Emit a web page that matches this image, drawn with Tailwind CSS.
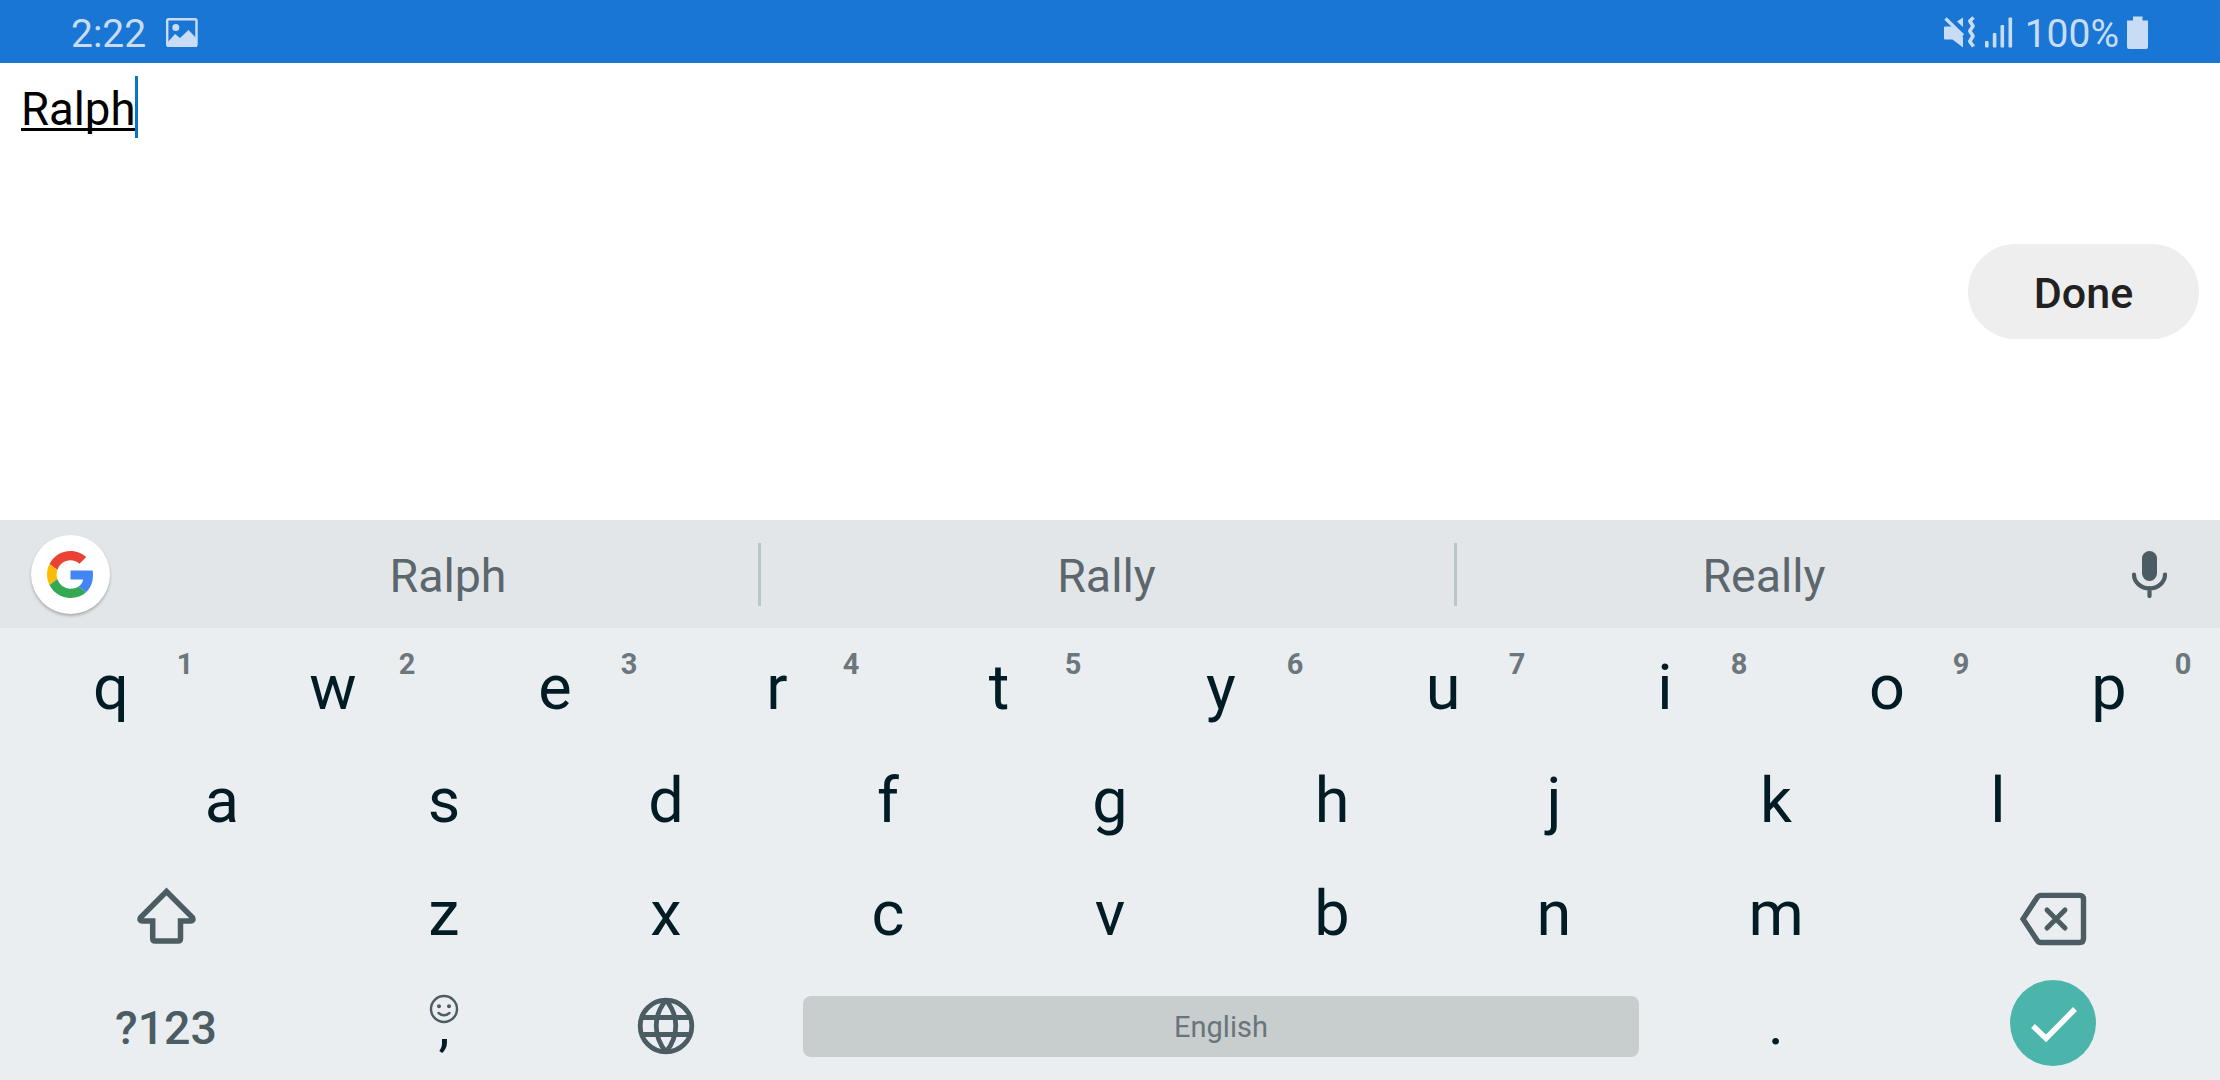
<!DOCTYPE html>
<html lang="en">
<head>
<meta charset="utf-8">
<title>Keyboard</title>
<script src="https://cdn.jsdelivr.net/npm/@tailwindcss/browser@4"></script>
</head>
<body class="w-[2220px] h-[1080px] overflow-hidden bg-white font-[Roboto,sans-serif] flex flex-col">

<header class="h-[63px] shrink-0 bg-[#1a76d4] flex items-start text-[#c8ddf5] text-[39px] leading-[46px] pl-[71px] pr-[71px] pt-[11px]">
  <span class="w-[95px]">2:22</span>
  <svg class="w-[32px] h-[30px] mt-[7px]" viewBox="0 0 32 30" fill="none">
    <rect x="1.2" y="1.2" width="29.3" height="26.6" rx="1.5" stroke="#c8ddf5" stroke-width="2.4"/>
    <circle cx="9.8" cy="9.5" r="3.5" fill="#c8ddf5"/>
    <path d="M1 25 9 16 14 20 22.500 12 31 21v8H1z" fill="#c8ddf5"/>
  </svg>
  <div class="ml-auto flex">
    <svg class="w-[34px] h-[34px] mt-[4px]" viewBox="0 0 34 34">
      <path d="M2 11.500h7L20 22v10.500L9.500 24.500H2q-1 0-1-1v-11q0-1 1-1zM20 2.500v9.500l-6-5.500z" fill="#c8ddf5"/>
      <path d="M2.500 3.500 20 20.500" stroke="#c8ddf5" stroke-width="3.200"/>
      <path d="M30.500 2.500 26.800 6 30 11 26.800 16 30 21 26.800 26.500 30.500 31.500" fill="none" stroke="#c8ddf5" stroke-width="3.600" stroke-linejoin="round"/>
    </svg>
    <svg class="w-[28px] h-[34px] mt-[4px] ml-[8px]" viewBox="0 0 28 34" fill="#c8ddf5">
      <rect x="0" y="26" width="3.600" height="6.500" rx="1"/><rect x="7.800" y="18" width="3.600" height="14.500" rx="1"/><rect x="15.500" y="10" width="3.600" height="22.500" rx="1"/><rect x="23.500" y="2.500" width="3.600" height="30" rx="1"/>
    </svg>
    <span class="ml-[12px]">100%</span>
    <svg class="w-[22px] h-[34px] ml-[8px] mt-[5px]" viewBox="0 0 22 34" fill="#c8ddf5"><path d="M6 .5h9.500v4H21V31q0 2-2 2H2q-2 0-2-2V4.500h6z"/></svg>
  </div>
</header>

<main class="h-[457px] shrink-0 flex flex-col">
  <div class="flex items-start pl-[21px] pt-[13px] h-[181px]">
    <span class="text-[45.5px] leading-[60px] pt-[4px] text-black underline decoration-[3px] underline-offset-[3px] [text-decoration-skip-ink:none]">Ralph</span>
    <span class="w-[3px] h-[62px] bg-[#0b73c4]"></span>
  </div>
  <button class="self-end mr-[21px] w-[231px] h-[95px] rounded-full bg-[#eeeeee] text-[#212121] text-[43px] font-medium leading-[50px] pt-[3px]">Done</button>
</main>

<section class="h-[108px] shrink-0 bg-[#e3e6e8] flex text-[#5b676d] text-[46.5px] leading-[54px] items-center">
  <div class="w-[138px] pl-[31px]">
    <div class="size-[79px] rounded-full bg-white shadow-[0_2px_3px_rgba(0,0,0,0.25)] flex items-center justify-center">
      <svg class="size-[47px]" viewBox="0 0 48 48">
        <path fill="#EA4335" d="M24 9.500c3.540 0 6.710 1.220 9.210 3.600l6.850-6.850C35.900 2.380 30.470 0 24 0 14.620 0 6.510 5.380 2.560 13.220l7.980 6.190C12.430 13.720 17.740 9.500 24 9.500z"/>
        <path fill="#4285F4" d="M46.980 24.550c0-1.570-.15-3.090-.38-4.550H24v9.020h12.940c-.58 2.960-2.260 5.480-4.780 7.180l7.730 6c4.510-4.180 7.090-10.360 7.090-17.650z"/>
        <path fill="#FBBC05" d="M10.530 28.590c-.48-1.450-.76-2.990-.76-4.590s.27-3.140.76-4.590l-7.980-6.190C.92 16.460 0 20.120 0 24c0 3.880.92 7.540 2.560 10.780l7.970-6.190z"/>
        <path fill="#34A853" d="M24 48c6.480 0 11.930-2.130 15.890-5.810l-7.730-6c-2.150 1.450-4.920 2.300-8.160 2.300-6.260 0-11.570-4.220-13.470-9.910l-7.980 6.190C6.510 42.620 14.620 48 24 48z"/>
      </svg>
    </div>
  </div>
  <span class="w-[620px] text-center pt-[4px]">Ralph</span>
  <span class="w-[3px] h-[63px] bg-[#b8c7c8]"></span>
  <span class="w-[691px] text-center pt-[4px]">Rally</span>
  <span class="w-[3px] h-[63px] ml-[2px] bg-[#b8c7c8]"></span>
  <span class="w-[614px] text-center pt-[4px]">Really</span>
  <svg class="w-[36px] h-[48px] ml-[60px]" viewBox="0 0 36 48" fill="none" stroke="#4c5c63">
    <rect x="11" y="1" width="15" height="30" rx="7.500" fill="#4c5c63" stroke="none"/>
    <path d="M3 24.500a15.500 14 0 0 0 31 0M18.500 38v8" stroke-width="4.200" stroke-linecap="round"/>
  </svg>
</section>

<section id="keys" class="h-[452px] shrink-0 bg-[#ebeef1] text-[#021c26] text-[63px] leading-[74px] flex flex-col">
  <div id="row1" class="h-[113px] flex"></div>
  <div id="row2" class="h-[113px] flex px-[111px]"></div>
  <div class="h-[113px] flex">
    <div class="w-[333px] flex items-center justify-center">
      <svg class="w-[60px] h-[58px] mt-[10px]" viewBox="0 0 60 58" fill="none" stroke="#4c5c63" stroke-width="5.500">
        <path d="M29.500 4.500 3.500 30.500q-1.500 3.500 2 3.500H15.700V51.500q0 2.500 2.500 2.500H41q2.500 0 2.500-2.500V34H53.500q3.500 0 2-3.500z"/>
      </svg>
    </div>
    <div id="row3" class="flex"></div>
    <div class="w-[333px] flex items-center justify-center">
      <svg class="w-[68px] h-[54px] mt-[16px]" viewBox="0 0 68 54" fill="none" stroke="#4c5c63" stroke-width="5.400">
        <path d="M21 3.400H59.500q4 0 4 4V46.500q0 4-4 4H21q-2.500 0-4-2.300L3 27 17 5.700q1.500-2.300 4-2.300z"/>
        <path d="M27 18 45 36M45 18 27 36" stroke-linecap="round" stroke-width="5"/>
      </svg>
    </div>
  </div>
  <div class="h-[113px] flex">
    <div class="w-[333px] text-center text-[46.5px] leading-[54px] font-medium text-[#4c5c63] pt-[34px] pr-[1px]">?123</div>
    <div class="w-[222px] flex flex-col items-center pt-[27px]">
      <svg class="size-[30px]" viewBox="0 0 30 30" fill="none" stroke="#4c5c63" stroke-width="2.400" stroke-linecap="round">
        <circle cx="15" cy="15" r="13"/><circle cx="10" cy="12.300" r="2" fill="#4c5c63" stroke="none"/><circle cx="20" cy="12.300" r="2" fill="#4c5c63" stroke="none"/><path d="M9.500 19q5.500 4.500 11 0"/>
      </svg>
      <span class="text-[56px] leading-[60px] -mt-[28px]">,</span>
    </div>
    <div class="w-[222px] flex items-start justify-center pt-[30px]">
      <svg class="size-[58px]" viewBox="0 0 58 58" fill="none" stroke="#4c5c63" stroke-width="4.800">
        <circle cx="29" cy="29" r="25.800"/><path d="M5 20.500H53M5 37.500H53M29 3C16 19 16 39 29 55M29 3C42 19 42 39 29 55"/>
      </svg>
    </div>
    <div class="w-[888px] px-[26px] pt-[29px]">
      <div class="h-[61px] rounded-lg bg-[#c8cdce] text-[#69757a] text-[29px] leading-[34px] text-center pt-[14px]">English</div>
    </div>
    <div class="w-[222px] text-center text-[60px] leading-[74px] pt-[20px]">.</div>
    <div class="w-[332px] flex justify-center pt-[13px]">
      <div class="size-[86px] rounded-full bg-[#4cb5ab] flex items-center justify-center">
        <svg class="size-[86px]" viewBox="0 0 86 86" fill="none" stroke="#fff" stroke-width="5.500"><path d="M23 46 36 58.500 65 29"/></svg>
      </div>
    </div>
  </div>
</section>

<script>
  const key = (c, hint) => `<div class="relative w-[222px] text-center pt-[23px]">${c}${hint ? `<span class="absolute left-[170px] w-[30px] top-[21px] text-[29px] leading-[30px] font-bold text-[#6b777c]">${hint}</span>` : ''}</div>`;
  document.getElementById('row1').innerHTML = [...'qwertyuiop'].map((c, i) => key(c, '1234567890'[i])).join('');
  document.getElementById('row2').innerHTML = [...'asdfghjkl'].map(c => key(c)).join('');
  document.getElementById('row3').innerHTML = [...'zxcvbnm'].map(c => key(c)).join('');
</script>
</body>
</html>
